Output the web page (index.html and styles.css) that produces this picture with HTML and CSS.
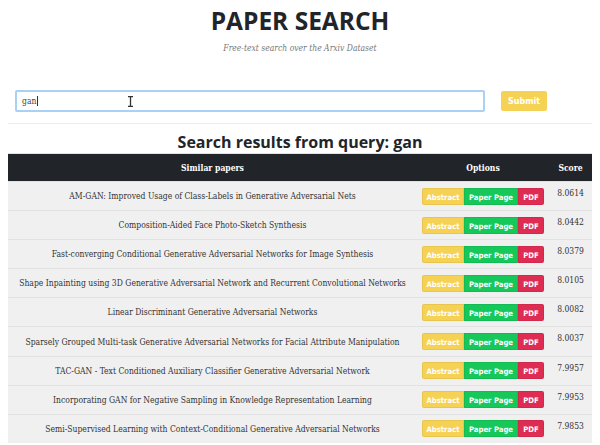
FILE: index.html
```html
<!DOCTYPE html>
<html>
<head>
<meta charset="utf-8">
<link rel="stylesheet" href="styles.css">
</head>
<body>
<div class="page">
  <header class="hero">
    <h1 class="title">PAPER SEARCH</h1>
    <p class="subtitle">Free-text search over the Arxiv Dataset</p>
  </header>
  <form class="search">
    <div class="field">
      <input class="query" type="text" value="gan">
      <span class="caret"></span>
      <svg class="ibeam" width="7" height="11" viewBox="0 0 7 11"><path d="M1 0.5h5M1 10.5h5M3.5 0.5v10" stroke="#333" stroke-width="1.3" fill="none"/></svg>
    </div>
    <button class="submit" type="button">Submit</button>
  </form>
  <hr class="rule">
  <h2 class="results-title">Search results from query: gan</h2>
  <table class="results">
    <thead>
      <tr><th class="c-title">Similar papers</th><th class="c-opt">Options</th><th class="c-score">Score</th></tr>
    </thead>
    <tbody>
      <tr><td class="c-title">AM-GAN: Improved Usage of Class-Labels in Generative Adversarial Nets</td><td class="c-opt"><span class="btns"><a class="b b-abs">Abstract</a><a class="b b-page">Paper Page</a><a class="b b-pdf">PDF</a></span></td><td class="c-score">8.0614</td></tr>
      <tr><td class="c-title">Composition-Aided Face Photo-Sketch Synthesis</td><td class="c-opt"><span class="btns"><a class="b b-abs">Abstract</a><a class="b b-page">Paper Page</a><a class="b b-pdf">PDF</a></span></td><td class="c-score">8.0442</td></tr>
      <tr><td class="c-title">Fast-converging Conditional Generative Adversarial Networks for Image Synthesis</td><td class="c-opt"><span class="btns"><a class="b b-abs">Abstract</a><a class="b b-page">Paper Page</a><a class="b b-pdf">PDF</a></span></td><td class="c-score">8.0379</td></tr>
      <tr><td class="c-title">Shape Inpainting using 3D Generative Adversarial Network and Recurrent Convolutional Networks</td><td class="c-opt"><span class="btns"><a class="b b-abs">Abstract</a><a class="b b-page">Paper Page</a><a class="b b-pdf">PDF</a></span></td><td class="c-score">8.0105</td></tr>
      <tr><td class="c-title">Linear Discriminant Generative Adversarial Networks</td><td class="c-opt"><span class="btns"><a class="b b-abs">Abstract</a><a class="b b-page">Paper Page</a><a class="b b-pdf">PDF</a></span></td><td class="c-score">8.0082</td></tr>
      <tr><td class="c-title">Sparsely Grouped Multi-task Generative Adversarial Networks for Facial Attribute Manipulation</td><td class="c-opt"><span class="btns"><a class="b b-abs">Abstract</a><a class="b b-page">Paper Page</a><a class="b b-pdf">PDF</a></span></td><td class="c-score">8.0037</td></tr>
      <tr><td class="c-title">TAC-GAN - Text Conditioned Auxiliary Classifier Generative Adversarial Network</td><td class="c-opt"><span class="btns"><a class="b b-abs">Abstract</a><a class="b b-page">Paper Page</a><a class="b b-pdf">PDF</a></span></td><td class="c-score">7.9957</td></tr>
      <tr><td class="c-title">Incorporating GAN for Negative Sampling in Knowledge Representation Learning</td><td class="c-opt"><span class="btns"><a class="b b-abs">Abstract</a><a class="b b-page">Paper Page</a><a class="b b-pdf">PDF</a></span></td><td class="c-score">7.9953</td></tr>
      <tr><td class="c-title">Semi-Supervised Learning with Context-Conditional Generative Adversarial Networks</td><td class="c-opt"><span class="btns"><a class="b b-abs">Abstract</a><a class="b b-page">Paper Page</a><a class="b b-pdf">PDF</a></span></td><td class="c-score">7.9853</td></tr>
    </tbody>
  </table>
</div>
</body>
</html>
```
FILE: styles.css
```css
html, body {
  margin: 0;
  padding: 0;
  background: #ffffff;
}
body {
  font-family: "DejaVu Serif", serif;
  color: #333;
  overflow: hidden;
}
.page {
  padding: 0 8px;
}
.hero {
  text-align: center;
  padding-top: 7px;
}
.title {
  margin: 0;
  font-family: "Open Sans", sans-serif;
  font-weight: 700;
  font-size: 24.5px;
  line-height: 28px;
  color: #212529;
}
.subtitle {
  margin: 7px 0 0;
  font-family: "DejaVu Serif", serif;
  font-style: italic;
  font-stretch: condensed;
  font-size: 8.5px;
  line-height: 12px;
  color: #777;
}
.search {
  display: flex;
  align-items: center;
  gap: 16px;
  padding: 0 7px;
  margin-top: 36px;
}
.field {
  position: relative;
  width: 470px;
}
.query {
  display: block;
  box-sizing: border-box;
  width: 470px;
  height: 22px;
  margin: 0;
  padding: 0 5px;
  border: 2px solid #a9d0f5;
  border-radius: 2px;
  font-family: "DejaVu Serif", serif;
  font-stretch: condensed;
  font-size: 8.5px;
  color: #444;
  outline: none;
}
.caret {
  position: absolute;
  left: 22px;
  top: 6px;
  width: 1px;
  height: 10px;
  background: #333;
}
.ibeam {
  position: absolute;
  left: 112px;
  top: 6px;
}
.submit {
  width: 46px;
  height: 20px;
  border: none;
  border-radius: 2px;
  background: #f6d254;
  color: #fff;
  font-family: "DejaVu Sans", sans-serif;
  font-weight: bold;
  font-size: 8px;
  padding: 0;
}
.rule {
  margin: 11px 0 0;
  border: none;
  border-top: 1px solid #ececec;
  height: 0;
}
.results-title {
  margin: 8px 0 0;
  text-align: center;
  font-family: "Open Sans", sans-serif;
  font-weight: 700;
  font-size: 16px;
  line-height: 20px;
  color: #212529;
}
.results {
  margin-top: 1px;
  width: 100%;
  border-collapse: collapse;
  table-layout: fixed;
  font-size: 8.5px;
}
.results th {
  background: #212529;
  color: #fff;
  font-weight: bold;
  height: 27px;
  padding: 0;
  font-family: "DejaVu Serif", serif;
  font-stretch: condensed;
  font-size: 8.5px;
  border-top: 1px solid #dee2e6;
}
.results td {
  background: #f0f0f0;
  height: 28.1px;
  padding: 0;
  border-top: 1px solid #e2e2e2;
  text-align: center;
  color: #333;
  font-stretch: condensed;
  white-space: nowrap;
}
.c-title { width: 409px; }
.c-opt { width: 132px; }
.c-score { width: 43px; }
.btns {
  display: inline-flex;
  vertical-align: middle;
}
.b {
  display: block;
  height: 17px;
  line-height: 17px;
  box-sizing: border-box;
  font-family: "DejaVu Sans", sans-serif;
  font-weight: bold;
  font-size: 7.7px;
  color: #fff;
  text-align: center;
  border: 1px solid rgba(0,0,0,0.06);
  white-space: nowrap;
}
.b-abs { width: 42px; background: #f6d254; border-radius: 2px 0 0 2px; }
.b-page { width: 54px; background: #16c75a; }
.b-pdf { width: 26px; background: #de2c52; border-radius: 0 2px 2px 0; }
td.c-score {
  text-align: center;
  vertical-align: top;
  padding-top: 6px;
  height: 22.1px;
}
```
